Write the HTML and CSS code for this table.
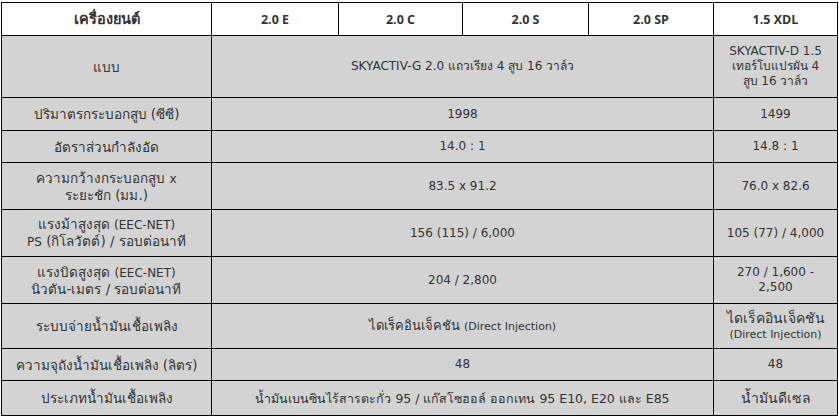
FILE: index.html
```html
<!DOCTYPE html>
<html lang="th">
<head>
<meta charset="utf-8">
<title>ข้อมูลเครื่องยนต์</title>
<link rel="stylesheet" href="styles.css">
</head>
<body>
<table class="spec">
  <colgroup>
    <col class="c-label">
    <col class="c-e">
    <col class="c-c">
    <col class="c-s">
    <col class="c-sp">
    <col class="c-xdl">
  </colgroup>
  <thead>
    <tr class="r-head">
      <th class="th-thai">เครื่องยนต์</th>
      <th>2.0 E</th>
      <th>2.0 C</th>
      <th>2.0 S</th>
      <th>2.0 SP</th>
      <th>1.5 XDL</th>
    </tr>
  </thead>
  <tbody>
    <tr class="r-type">
      <td class="label">แบบ</td>
      <td colspan="4">SKYACTIV-G 2.0 แถวเรียง 4 สูบ 16 วาล์ว</td>
      <td>SKYACTIV-D 1.5<br>เทอร์โบแปรผัน 4<br>สูบ 16 วาล์ว</td>
    </tr>
    <tr class="r-1a">
      <td class="label">ปริมาตรกระบอกสูบ (ซีซี)</td>
      <td colspan="4">1998</td>
      <td>1499</td>
    </tr>
    <tr class="r-1b">
      <td class="label">อัตราส่วนกำลังอัด</td>
      <td colspan="4">14.0 : 1</td>
      <td>14.8 : 1</td>
    </tr>
    <tr class="r-2">
      <td class="label">ความกว้างกระบอกสูบ <span class="lat">x</span><br>ระยะชัก (มม.)</td>
      <td colspan="4">83.5 x 91.2</td>
      <td>76.0 x 82.6</td>
    </tr>
    <tr class="r-2">
      <td class="label">แรงม้าสูงสุด <span class="lat">(EEC-NET)</span><br><span class="lat">PS</span> (กิโลวัตต์) / รอบต่อนาที</td>
      <td colspan="4">156 (115) / 6,000</td>
      <td>105 (77) / 4,000</td>
    </tr>
    <tr class="r-2">
      <td class="label">แรงบิดสูงสุด <span class="lat">(EEC-NET)</span><br>นิวตัน-เมตร / รอบต่อนาที</td>
      <td colspan="4">204 / 2,800</td>
      <td>270 / 1,600 -<br>2,500</td>
    </tr>
    <tr class="r-inj">
      <td class="label">ระบบจ่ายน้ำมันเชื้อเพลิง</td>
      <td colspan="4" class="inj">ไดเร็คอินเจ็คชัน <span class="small">(Direct Injection)</span></td>
      <td><span class="big">ไดเร็คอินเจ็คชัน</span><br><span class="small">(Direct Injection)</span></td>
    </tr>
    <tr class="r-1b">
      <td class="label">ความจุถังน้ำมันเชื้อเพลิง (ลิตร)</td>
      <td colspan="4">48</td>
      <td>48</td>
    </tr>
    <tr class="r-last">
      <td class="label">ประเภทน้ำมันเชื้อเพลิง</td>
      <td colspan="4" class="fuel">น้ำมันเบนซินไร้สารตะกั่ว 95 / แก๊สโซฮอล์ ออกเทน 95 E10, E20 และ E85</td>
      <td class="big">น้ำมันดีเซล</td>
    </tr>
  </tbody>
</table>
</body>
</html>
```

FILE: styles.css
```css
html, body {
  margin: 0;
  padding: 0;
  background: #ffffff;
}

body {
  padding: 2px 0 0 1px;
  font-family: "DejaVu Sans", Tahoma, "Noto Sans", sans-serif;
  font-size: 12px;
  color: #333333;
}

.spec {
  border-collapse: collapse;
  table-layout: fixed;
  width: 836px;
  border: 1px solid #000;
}

.c-label { width: 210px; }
.c-e { width: 127px; }
.c-c { width: 124px; }
.c-s { width: 126px; }
.c-sp { width: 125px; }
.c-xdl { width: 124px; }

.spec th,
.spec td {
  border: 1px solid #000;
  text-align: center;
  vertical-align: middle;
  padding: 0 3px;
  line-height: 15px;
}

.spec th {
  background: #ffffff;
  font-family: "Open Sans", "DejaVu Sans", sans-serif;
  font-weight: 700;
  font-size: 12.5px;
  color: #333333;
}

.spec th.th-thai {
  font-family: "DejaVu Sans", sans-serif;
  font-weight: 600;
  font-size: 14.5px;
}

.spec td {
  background: #d3d3d3;
}

.spec td.label {
  font-size: 13.5px;
  line-height: 16px;
}

.lat { font-size: 12px; }

.fuel { font-size: 12.5px; }

.inj { font-size: 13px; }

.r-head { height: 33px; }
.r-type { height: 62px; }
.r-1a { height: 33px; }
.r-1b { height: 32px; }
.r-2 { height: 47px; }
.r-inj { height: 45px; }
.r-last { height: 35px; }

.small { font-size: 11px; }
.big { font-size: 14px; }
```
